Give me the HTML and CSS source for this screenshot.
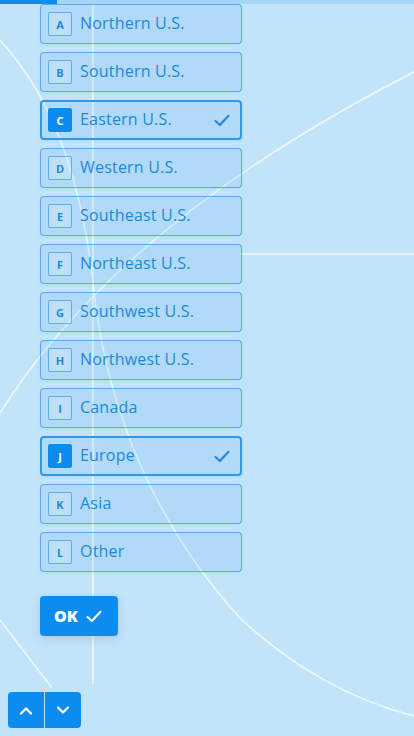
FILE: index.html
```html
<!DOCTYPE html>
<html lang="en">
<head>
    <meta charset="UTF-8">
    <meta name="viewport" content="width=device-width, initial-scale=1.0">
    <title>Region</title>
    <link rel="stylesheet" href="styles.css">
</head>
<body>

    <!-- Decorative background lines -->
    <svg class="backdrop" width="414" height="736" viewBox="0 0 414 736">
        <path d="M93 0 V684" />
        <path d="M240 254 H414" />
        <path d="M0 413 Q120 222 414 72" />
        <path d="M-6 34 C60 100 85 200 95 300 C110 420 160 530 240 618 C290 665 350 700 414 716" />
        <path d="M0 620 L52 688" />
    </svg>

    <div class="progress"><div class="progress-fill"></div></div>

    <main class="question">
        <ul class="choices">
            <li class="choice"><span class="key">A</span><span class="label">Northern U.S.</span></li>
            <li class="choice"><span class="key">B</span><span class="label">Southern U.S.</span></li>
            <li class="choice selected"><span class="key">C</span><span class="label">Eastern U.S.</span>
                <svg class="tick" width="16" height="13" viewBox="0 0 16 13"><path d="M1.5 7 L5.8 11 L14.5 1.8" /></svg>
            </li>
            <li class="choice"><span class="key">D</span><span class="label">Western U.S.</span></li>
            <li class="choice"><span class="key">E</span><span class="label">Southeast U.S.</span></li>
            <li class="choice"><span class="key">F</span><span class="label">Northeast U.S.</span></li>
            <li class="choice"><span class="key">G</span><span class="label">Southwest U.S.</span></li>
            <li class="choice"><span class="key">H</span><span class="label">Northwest U.S.</span></li>
            <li class="choice"><span class="key">I</span><span class="label">Canada</span></li>
            <li class="choice selected"><span class="key">J</span><span class="label">Europe</span>
                <svg class="tick" width="16" height="13" viewBox="0 0 16 13"><path d="M1.5 7 L5.8 11 L14.5 1.8" /></svg>
            </li>
            <li class="choice"><span class="key">K</span><span class="label">Asia</span></li>
            <li class="choice"><span class="key">L</span><span class="label">Other</span></li>
        </ul>

        <button class="ok">OK
            <svg width="16" height="13" viewBox="0 0 16 13"><path d="M1.5 7 L5.8 11 L14.5 1.8" /></svg>
        </button>
    </main>

    <div class="nav">
        <button class="nav-btn" aria-label="Previous">
            <svg width="14" height="9" viewBox="0 0 14 9"><path d="M2 7.5 L7 2.5 L12 7.5" /></svg>
        </button>
        <button class="nav-btn" aria-label="Next">
            <svg width="14" height="9" viewBox="0 0 14 9"><path d="M2 1.5 L7 6.5 L12 1.5" /></svg>
        </button>
    </div>

</body>
</html>
```

FILE: styles.css
```css
* {
    margin: 0;
    padding: 0;
    box-sizing: border-box;
}

body {
    font-family: 'Open Sans', 'DejaVu Sans', sans-serif;
    background-color: #c2e4f9;
    color: #1e88d8;
    width: 414px;
    height: 736px;
    overflow: hidden;
    position: relative;
}

/* Background lines */
.backdrop {
    position: absolute;
    top: 0;
    left: 0;
    z-index: 0;
}

.backdrop path {
    fill: none;
    stroke: rgba(255, 255, 255, 0.75);
    stroke-width: 1.6;
}

/* Progress bar */
.progress {
    position: absolute;
    top: 0;
    left: 0;
    width: 100%;
    height: 4px;
    background-color: #a6d5f6;
    z-index: 2;
}

.progress-fill {
    width: 57px;
    height: 100%;
    background-color: #0d8cf0;
}

/* Question */
.question {
    position: relative;
    z-index: 1;
    padding: 4px 0 0 40px;
}

.choices {
    list-style: none;
    display: flex;
    flex-direction: column;
    gap: 8px;
    width: 202px;
}

.choice {
    display: flex;
    align-items: center;
    height: 40px;
    padding: 0 7px;
    background-color: rgba(20, 140, 240, 0.1);
    border: 1px solid rgba(20, 130, 230, 0.55);
    border-radius: 4px;
    box-shadow: 0 1px 3px rgba(20, 130, 230, 0.12);
}

.choice.selected {
    border: 2px solid #3197e7;
    padding: 0 6px;
}

.key {
    display: flex;
    align-items: center;
    justify-content: center;
    width: 24px;
    height: 24px;
    margin-right: 8px;
    border: 1px solid rgba(20, 130, 230, 0.55);
    border-radius: 2px;
    background-color: rgba(255, 255, 255, 0.18);
    font-size: 11px;
    font-weight: 700;
    color: #1e88d8;
}

.selected .key {
    background-color: #0d8cf0;
    border-color: #0d8cf0;
    color: #ffffff;
}

.label {
    flex: 1;
    font-size: 16px;
    line-height: 20px;
    padding-bottom: 2px;
    letter-spacing: 0.2px;
    white-space: nowrap;
}

.tick {
    margin-right: 4px;
}

.tick path {
    fill: none;
    stroke: #1e88d8;
    stroke-width: 2;
    stroke-linecap: round;
    stroke-linejoin: round;
}

/* OK button */
.ok {
    display: flex;
    align-items: center;
    gap: 8px;
    margin-top: 24px;
    height: 40px;
    padding: 0 16px 0 14px;
    background-color: #0d8cf0;
    color: #ffffff;
    border: none;
    border-radius: 4px;
    font-family: 'Open Sans', sans-serif;
    font-size: 16px;
    font-weight: 800;
    box-shadow: 0 3px 10px rgba(0, 60, 140, 0.15);
}

.ok path {
    fill: none;
    stroke: #ffffff;
    stroke-width: 2;
    stroke-linecap: round;
    stroke-linejoin: round;
}

/* Bottom navigation */
.nav {
    position: absolute;
    left: 8px;
    bottom: 8px;
    display: flex;
    gap: 1px;
    background-color: #c2e4f9;
    border-radius: 4px;
    overflow: hidden;
    z-index: 2;
}

.nav-btn {
    display: flex;
    align-items: center;
    justify-content: center;
    width: 36px;
    height: 36px;
    background-color: #0d8cf0;
    border: none;
}

.nav-btn path {
    fill: none;
    stroke: #ffffff;
    stroke-width: 2.2;
    stroke-linecap: round;
    stroke-linejoin: round;
}
```
